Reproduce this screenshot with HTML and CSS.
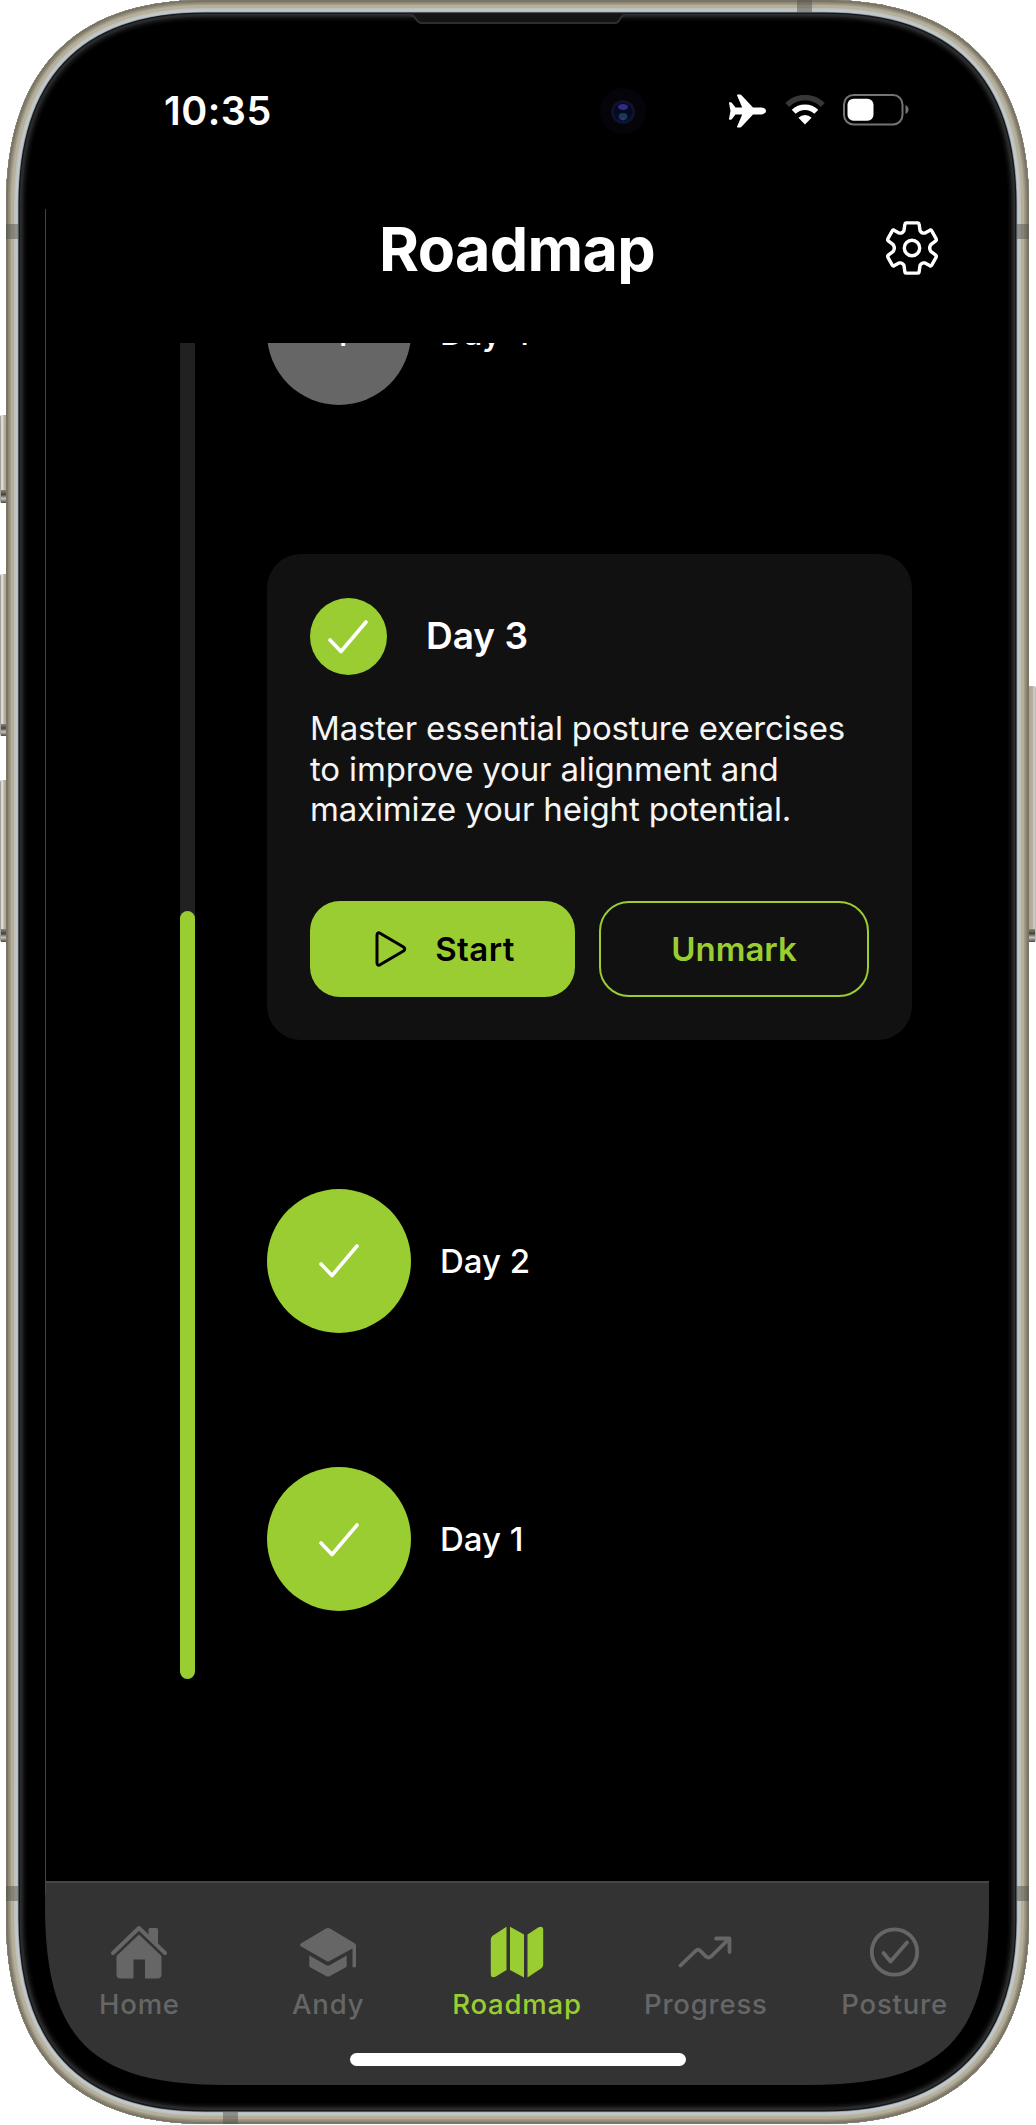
FILE: index.html
```html
<!DOCTYPE html>
<html lang="en">
<head>
<meta charset="utf-8">
<title>Roadmap</title>
<link rel="stylesheet" href="styles.css">
</head>
<body>
<div class="device">
  <svg class="frame" viewBox="0 0 1036 2125" aria-hidden="true">
    <defs>
      <linearGradient id="btnL" x1="0" x2="1" y1="0" y2="0"><stop offset="0" stop-color="#8c8a86"/><stop offset=".25" stop-color="#f0eeea"/><stop offset=".5" stop-color="#b9b2a0"/><stop offset="1" stop-color="#a39c88"/></linearGradient>
      <linearGradient id="btnR" x1="1" x2="0" y1="0" y2="0"><stop offset="0" stop-color="#b0b0b0"/><stop offset=".25" stop-color="#d5d4d2"/><stop offset=".4" stop-color="#b9b29f"/><stop offset="1" stop-color="#a9a28d"/></linearGradient>
      <linearGradient id="cap" x1="0" x2="0" y1="0" y2="1"><stop offset="0" stop-color="#8a8575"/><stop offset=".35" stop-color="#45433d"/><stop offset=".65" stop-color="#c4c2bb"/><stop offset="1" stop-color="#4a4740"/></linearGradient>
      <path id="body" d="M6 205C6 75 70 0 205 0H824C959 0 1029 70 1029 205V1919C1029 2049 959 2124 824 2124H205C70 2124 6 2049 6 1919Z"/>
      <clipPath id="bodyClip"><use href="#body"/></clipPath>
    </defs>
    <g fill="url(#btnL)">
      <rect x="0" y="415" width="8" height="88" rx="2"/><rect x="0" y="574" width="8" height="162" rx="2"/><rect x="0" y="780" width="8" height="162" rx="2"/>
    </g>
    <rect x="1028" y="686" width="8" height="256" rx="2" fill="url(#btnR)"/>
    <g fill="url(#cap)">
      <rect x="1" y="490" width="5" height="13"/><rect x="1" y="724" width="5" height="12"/><rect x="1" y="929" width="5" height="13"/><rect x="1029" y="929" width="6" height="13"/>
    </g>
    <g clip-path="url(#bodyClip)" fill="none">
      <use href="#body" fill="#000"/>
      <use href="#body" stroke="#050505" stroke-width="42"/>
      <use href="#body" stroke="#0c0c0c" stroke-width="39"/>
      <use href="#body" stroke="#171717" stroke-width="36"/>
      <use href="#body" stroke="#262728" stroke-width="33"/>
      <use href="#body" stroke="#2c2e30" stroke-width="30"/>
      <use href="#body" stroke="#131518" stroke-width="27.500"/>
      <use href="#body" stroke="#8d9499" stroke-width="25"/>
      <use href="#body" stroke="#c1c8cb" stroke-width="23.500"/>
      <use href="#body" stroke="#bfc0b8" stroke-width="19"/>
      <use href="#body" stroke="#b5af9c" stroke-width="16"/>
      <use href="#body" stroke="#a19b88" stroke-width="10"/>
      <use href="#body" stroke="#8c8776" stroke-width="7"/>
      <use href="#body" stroke="#7a7565" stroke-width="4"/>
    </g>
    <g fill="#4c4c46" fill-opacity=".45">
      <rect x="6" y="224" width="12.500" height="15"/><rect x="1016.500" y="224" width="12.500" height="15"/>
      <rect x="6" y="1886" width="12.500" height="15"/><rect x="1016.500" y="1886" width="12.500" height="15"/>
      <rect x="797" y="0" width="15" height="13"/><rect x="223" y="2112" width="15" height="12"/>
    </g>
    <path d="M413 14H623L616 22H420Z" fill="#141414"/>
    <path d="M411 15.500q3 0 5 3.500t5 4H615q3 0 5-4t5-3.500" fill="none" stroke="#2e2e2e" stroke-width="2"/>
  </svg>

  <main class="screen">
    <div class="status">
      <span class="time">10:35</span>
      <svg class="camera" viewBox="0 0 46 46">
        <circle cx="23" cy="23" r="23" fill="#060408"/><circle cx="23" cy="24" r="12" fill="#0c1230"/><circle cx="23" cy="24" r="9" fill="#060a20"/>
        <ellipse cx="23" cy="19" rx="5" ry="3" fill="#302e80"/><ellipse cx="23" cy="28.500" rx="4.500" ry="3.500" fill="#123c58"/><circle cx="23" cy="31" r="1.500" fill="#4c2a78"/>
      </svg>
      <svg class="plane" viewBox="0 0 37 34"><path d="M8.500 .5H11Q12 .5 13 1.700L24 13.500H32.500Q37 14.300 37 17T32.500 20.500H24L13 32.300Q12 33.500 11 33.500H8.500Q7.800 33.500 8.100 32.500L13.200 20.600H6.500L3 25Q2.500 25.700 1.800 25.700H.6Q0 25.700 0 25L1.500 17L0 9Q0 8.300.6 8.300H1.800Q2.500 8.300 3 9L6.500 13.400H13.200L8.100 1.500Q7.800 .5 8.500 .5Z" fill="#fff"/></svg>
      <svg class="wifi" viewBox="0 0 40 30"><path d="M2.200 10A25 25 0 0 1 37.800 10" fill="none" stroke="#373737" stroke-width="5.500"/><path d="M8.700 16.800A16 16 0 0 1 31.300 16.800" fill="none" stroke="#fff" stroke-width="5.500"/><path d="M20 29.500L13.400 22.700A9.500 9.500 0 0 1 26.600 22.700Z" fill="#fff"/></svg>
      <svg class="battery" viewBox="0 0 66 32"><rect x="1" y="1" width="58.500" height="29.500" rx="9.500" fill="none" stroke="#747474" stroke-width="2"/><rect x="4.500" y="4.700" width="26" height="22" rx="6" fill="#fff"/><path d="M62.500 11Q65.500 12.500 65.500 15.500T62.500 20Z" fill="#747474"/></svg>
    </div>
    <header class="header">
      <h1 class="title">Roadmap</h1>
      <svg class="gear" viewBox="0 0 52 54" fill="none" stroke="#fff" stroke-width="3.400" stroke-linejoin="round"><path d="M20 1.900H32Q33 1.900 33.100 2.900L34 9.500Q35.500 12.700 39 12L44 9.200Q45 8.800 45.600 9.700L50.200 17.800Q50.600 18.800 50 19.600L44.800 23.700Q42.500 27 44.800 30.300L50 34.400Q50.600 35.200 50.200 36.200L45.600 44.300Q45 45.200 44 44.800L39 42Q35.500 41.300 34 44.500L33.100 51.100Q33 52.100 32 52.100H20Q19 52.100 18.900 51.100L18 44.500Q16.500 41.300 13 42L8 44.800Q7 45.200 6.400 44.300L1.800 36.200Q1.400 35.200 2 34.400L7.200 30.300Q9.500 27 7.200 23.700L2 19.600Q1.400 18.800 1.800 17.800L6.400 9.700Q7 8.800 8 9.200L13 12Q16.500 12.700 18 9.500L18.900 2.900Q19 1.900 20 1.900Z"/><circle cx="26" cy="27" r="7.700"/></svg>
    </header>

    <section class="roadmap">
      <div class="track"><div class="fill"></div></div>
      <div class="days">
        <div class="day locked"><span class="dot">4</span><span class="name">Day 4</span></div>
        <article class="card">
          <div class="card-head">
            <span class="badge"><svg class="check" viewBox="0 0 40 34"><path d="M2 20L13 31.500L38 2"/></svg></span>
            <h2 class="card-title">Day 3</h2>
          </div>
          <p class="text">Master essential posture exercises<br>to improve your alignment and<br>maximize your height potential.</p>
          <div class="actions">
            <button class="btn start"><svg class="play" viewBox="0 0 32 36"><path d="M2 4V32Q2.200 35 5 33.800L28.500 20Q31 18 28.500 16L5 2.200Q2.200 1 2 4Z"/></svg><span>Start</span></button>
            <button class="btn unmark">Unmark</button>
          </div>
        </article>
        <div class="day"><span class="dot"><svg class="check" viewBox="0 0 40 34"><path d="M2 20L13 31.500L38 2"/></svg></span><span class="name">Day 2</span></div>
        <div class="day"><span class="dot"><svg class="check" viewBox="0 0 40 34"><path d="M2 20L13 31.500L38 2"/></svg></span><span class="name">Day 1</span></div>
      </div>
    </section>

    <nav class="tabs">
      <a class="tab"><svg class="icon" viewBox="0 0 56 54"><path d="M2 28L28 3L54 28" fill="none" stroke="currentColor" stroke-width="4" stroke-linecap="round" stroke-linejoin="round"/><path d="M37.500 10V4.500Q37.500 3 39 3H45.500Q47 3 47 4.500V20Z"/><path d="M28 9.500L50.500 31V49.500Q50.500 53.500 46.500 53.500H34V34.500H22.500V53.500H9.500Q5.500 53.500 5.500 49.500V31Z"/></svg><span>Home</span></a>
      <a class="tab"><svg class="icon" viewBox="0 0 56 54"><path d="M26 3.500Q28 2.500 30 3.500L55 18.500Q56 19 56 20.500V41Q56 42.500 54.200 42.500T52.500 41V23.500L29.500 36Q28 37 26.500 36L.8 21.300Q-.5 20 .8 18.500Z"/><path d="M9.300 30.500L26 40Q28 41.200 30 40L46.700 30.500V40.500Q46.700 41.500 45.500 42.500L30 51Q28 52.200 26 51L10.500 42.500Q9.300 41.500 9.300 40.500Z"/></svg><span>Andy</span></a>
      <a class="tab active"><svg class="icon" viewBox="0 0 56 54"><path d="M17.500 1.800V45L6.500 51.800Q1.800 53.500 1.800 49V14.500Q1.800 12 4 10.500Z"/><path d="M21 1.800L35 9.500V52.500L21 45Z"/><path d="M38.500 9.500L49.500 2.300Q54.200 .5 54.200 5V39.500Q54.200 42 52 43.500L38.500 52.500Z"/></svg><span>Roadmap</span></a>
      <a class="tab"><svg class="icon" viewBox="0 0 56 54"><path d="M2.500 40.500L17.500 26Q20 23.500 22.500 26L28 31.500Q30.500 33.500 33 31.500L51 14M38 13.500H51.500V27" fill="none" stroke="currentColor" stroke-width="3.800" stroke-linecap="round" stroke-linejoin="round"/></svg><span>Progress</span></a>
      <a class="tab"><svg class="icon" viewBox="0 0 56 54"><g fill="none" stroke="currentColor" stroke-width="3.800" stroke-linecap="round" stroke-linejoin="round"><circle cx="27.500" cy="27" r="22.700"/><path d="M16.500 28L23.500 36.500L40 17.500"/></g></svg><span>Posture</span></a>
      <div class="indicator"></div>
    </nav>
  </main>
</div>
</body>
</html>
```
FILE: styles.css
```css
* { box-sizing: border-box; }
body { margin: 0; background: #fff; font-family: Inter, "Liberation Sans", sans-serif; color: #fff; }
h1, h2, p { margin: 0; }
svg { display: block; flex: none; }
.device { position: relative; width: 1036px; height: 2125px; overflow: hidden; }
.frame { position: absolute; inset: 0; width: 1036px; height: 2125px; }
.screen { position: relative; display: flex; flex-direction: column; width: 944px; height: 2085px; margin-left: 45px; }
.screen::before { content: ""; position: absolute; left: 0; top: 209px; width: 1px; height: 1685px; background: #444; z-index: 2; }

.status { display: flex; height: 209px; padding-left: 119px; align-items: flex-start; }
.time { width: 436px; padding-top: 87px; font-size: 39.500px; line-height: 48px; font-weight: 600; letter-spacing: 0.500px; }
.camera { width: 46px; height: 46px; margin: 88px 83px 0 0; }
.plane { width: 37px; height: 34px; margin: 94px 19px 0 0; }
.wifi { width: 40px; height: 30px; margin: 95px 18px 0 0; }
.battery { width: 66px; height: 32px; margin-top: 94px; }

.header { display: flex; height: 134px; padding: 0 51px 0 334px; justify-content: space-between; }
.title { font-size: 61px; line-height: 74px; font-weight: 700; padding-top: 3px; letter-spacing: -0.650px; }
.gear { width: 52px; height: 54px; margin-top: 12px; }

.roadmap { display: flex; height: 1538px; padding-left: 135px; overflow: hidden; }
.track { display: flex; flex: none; align-items: flex-end; width: 15px; height: 1336px; margin-right: 72px; background: #212121; border-radius: 0 0 8px 8px; }
.fill { width: 15px; height: 768px; background: #9acd32; border-radius: 8px; }
.days { width: 645px; margin-top: -82px; }
.day { display: flex; align-items: center; gap: 29px; height: 144px; margin-bottom: 134.500px; }
.dot { display: flex; align-items: center; justify-content: center; width: 144px; height: 144px; border-radius: 50%; background: #9acd32; font-size: 34px; font-weight: 500; }
.locked { margin-bottom: 149px; }
.locked .dot { background: #666; }
.name { font-size: 33px; font-weight: 500; }
.check { width: 40px; height: 34px; margin-top: 1px; margin-right: 1px; fill: none; stroke: #fff; stroke-width: 3.600; stroke-linecap: round; stroke-linejoin: round; }
.card { height: 486px; margin-bottom: 148.500px; padding: 43px 43px 42px; background: #111; border-radius: 34px; }
.card-head { display: flex; align-items: center; gap: 39px; height: 78px; }
.badge { display: flex; align-items: center; justify-content: center; width: 77px; height: 77px; border-radius: 50%; background: #9acd32; }
.card-title { font-size: 37px; font-weight: 600; line-height: 50px; }
.text { margin-top: 33px; font-size: 33px; line-height: 40.500px; letter-spacing: -0.160px; white-space: nowrap; color: #f5f5f5; }
.actions { display: flex; gap: 24px; margin-top: 71px; }
.btn { display: flex; align-items: center; justify-content: center; height: 96px; padding: 0; border: 0; border-radius: 30px; font: 600 33px Inter, sans-serif; }
.start { width: 265px; gap: 28px; padding-left: 5px; background: #9acd32; color: #000; letter-spacing: 0.400px; }
.play { width: 32px; height: 36px; fill: none; stroke: #000; stroke-width: 3; stroke-linejoin: round; }
.unmark { width: 270px; background: transparent; border: 2px solid #9acd32; color: #9acd32; }

.tabs { position: relative; display: flex; height: 204px; padding-top: 42px; background: #333; border-top: 2px solid #464646; color: #666; clip-path: path("M0 0H944V24C944 158 898 204 764 204H180C46 204 0 158 0 24Z"); }
.tab { display: flex; flex: 1; flex-direction: column; align-items: center; gap: 7px; font-size: 27.500px; line-height: 36px; font-weight: 500; letter-spacing: 0.800px; }
.icon { width: 56px; height: 54px; fill: currentColor; }
.active { color: #9acd32; }
.indicator { position: absolute; left: 305px; top: 170px; width: 336px; height: 13px; border-radius: 7px; background: #fff; }
```
